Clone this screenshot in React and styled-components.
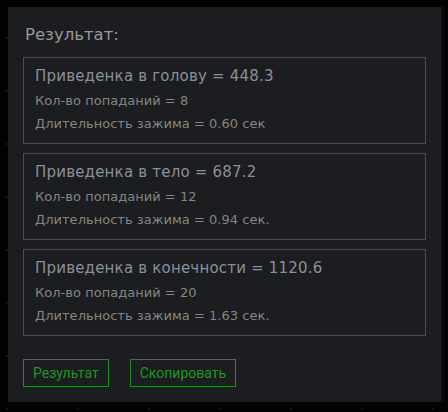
import React from "react";
import styled, { createGlobalStyle } from "styled-components";

const GlobalStyle = createGlobalStyle`
  html, body {
    margin: 0;
    padding: 0;
    background-color: #020203;
    background-image:
      radial-gradient(circle at 13px 9px, #2a2a2c 0.7px, transparent 1.2px),
      radial-gradient(circle at 41px 27px, #202022 0.7px, transparent 1.2px),
      radial-gradient(circle at 7px 38px, #1c1c1e 0.6px, transparent 1.1px);
    background-size: 61px 47px, 83px 59px, 71px 53px;
    min-height: 412px;
  }
`;

const Page = styled.div`
  padding: 7px 7px 10px 8px;
`;

const Panel = styled.div`
  width: 433px;
  height: 395px;
  box-sizing: border-box;
  background: #1b1d21;
  padding: 15px;
  display: flex;
  flex-direction: column;
  box-shadow: 3px 0 0 #0a0a0b;
`;

const Title = styled.div`
  font-family: "DejaVu Sans", sans-serif;
  font-size: 16.5px;
  line-height: 26px;
  color: #96989a;
  padding-left: 2px;
  margin-bottom: 9px;
`;

const List = styled.div`
  display: flex;
  flex-direction: column;
  gap: 9px;
`;

const Box = styled.div`
  height: 87px;
  box-sizing: border-box;
  border: 1px solid #4b4c4e;
  padding: 6px 11px 0 11px;
`;

const BoxTitle = styled.div`
  font-family: "DejaVu Sans", sans-serif;
  font-size: 15px;
  letter-spacing: 0.2px;
  line-height: 24px;
  color: #8a9097;
  margin-bottom: 1px;
`;

const Line = styled.div`
  font-family: "DejaVu Sans", sans-serif;
  font-size: 13px;
  letter-spacing: 0.03px;
  line-height: 23px;
  color: #83867f;
`;

const Actions = styled.div`
  display: flex;
  gap: 21px;
  margin-top: 23px;
`;

const Button = styled.button`
  height: 28px;
  box-sizing: border-box;
  padding: 0 9px;
  background: transparent;
  border: 1px solid #1a8f1a;
  color: #1f971f;
  font-family: Roboto, "Liberation Sans", sans-serif;
  font-size: 14px;
  cursor: pointer;
`;

const results = [
  { part: "голову", value: "448.3", hits: 8, hold: "0.60 сек" },
  { part: "тело", value: "687.2", hits: 12, hold: "0.94 сек." },
  { part: "конечности", value: "1120.6", hits: 20, hold: "1.63 сек." },
];

export default function App() {
  return (
    <>
      <GlobalStyle />
      <Page>
        <Panel>
          <Title>Результат:</Title>
          <List>
            {results.map((r) => (
              <Box key={r.part}>
                <BoxTitle>
                  Приведенка в {r.part} = {r.value}
                </BoxTitle>
                <Line>Кол-во попаданий = {r.hits}</Line>
                <Line>Длительность зажима = {r.hold}</Line>
              </Box>
            ))}
          </List>
          <Actions>
            <Button>Результат</Button>
            <Button>Скопировать</Button>
          </Actions>
        </Panel>
      </Page>
    </>
  );
}
